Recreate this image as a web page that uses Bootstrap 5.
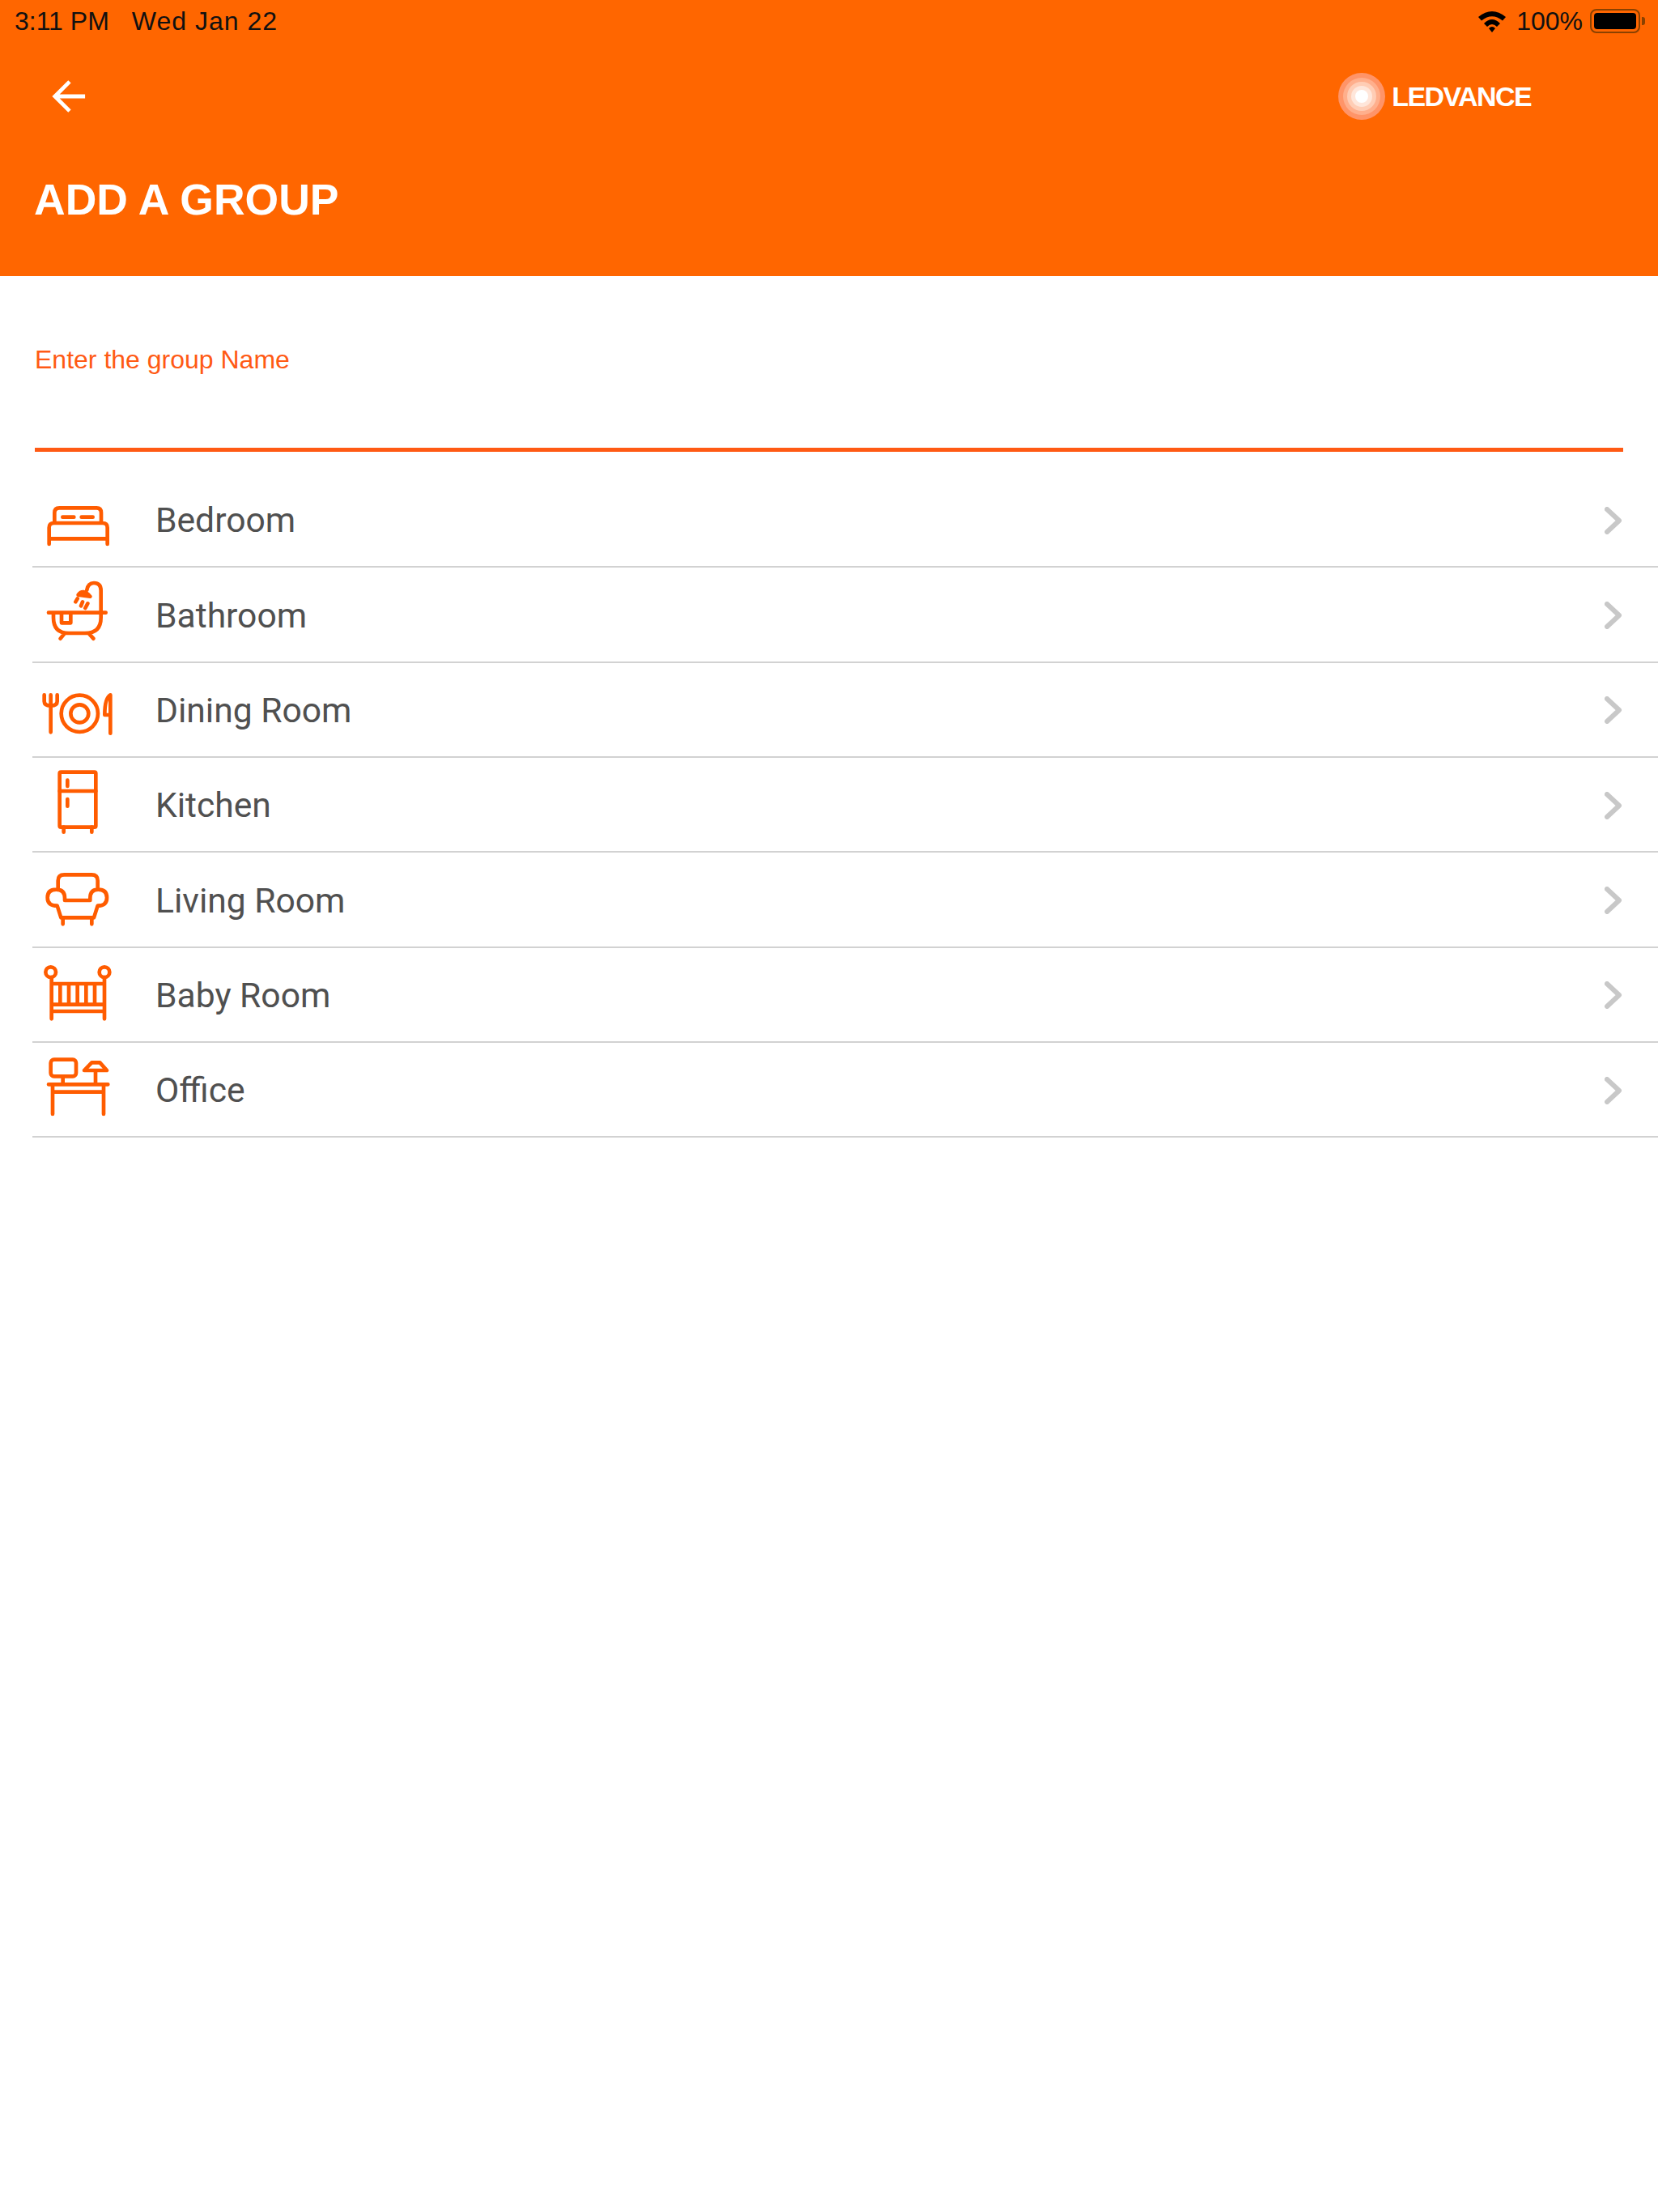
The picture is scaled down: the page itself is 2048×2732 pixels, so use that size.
<!DOCTYPE html>
<html lang="en">
<head>
<meta charset="UTF-8">
<meta name="viewport" content="width=device-width, initial-scale=1.0">
<title>Add a group</title>
<link rel="stylesheet" href="https://cdn.jsdelivr.net/npm/bootstrap@5.3.0/dist/css/bootstrap.min.css">
<style>
    body { background: #fff; font-family: "Liberation Sans", Arial, sans-serif; }
    .app-header { background: #ff6600; height: 341px; }
    .status-row { height: 52px; padding: 0 16px 0 18px; font-size: 32px; color: #111; line-height: 52px; }
    .status-time { margin-right: 28px; }
    .status-date { letter-spacing: 1px; }
    .wifi-icon { margin-right: 12px; }
    .battery-box { width: 62px; height: 30px; border: 2px solid #8a4100; border-radius: 8px; padding: 3px; margin-left: 9px; }
    .battery-fill { background: #000; height: 100%; border-radius: 4px; }
    .battery-tip { width: 4px; height: 10px; background: #8a4100; margin-left: 2px; border-radius: 0 3px 3px 0; }
    .tool-row { height: 64px; margin-top: 35px; padding: 0 157px 0 63px; color: #fff; }
    .logo-word { font-size: 34px; font-weight: 700; letter-spacing: -1.6px; margin-left: 8px; line-height: 1; }
    .page-title { font-size: 53.5px; font-weight: 700; color: #fff; margin: 0; padding: 65px 0 0 42px; line-height: 62px; }
    .group-form { padding: 84px 43px 0 43px; height: 243px; }
    .group-label { color: #ff5a14; font-size: 32px; line-height: 38px; margin: 0; display: block; }
    .group-input { display: block; width: 100%; height: 95px; border: 0; border-bottom: 5px solid #ff5a14; outline: 0; background: transparent; font-size: 32px; }
    .room-list { margin-left: 40px; }
    .room-row { height: 117.33px; padding: 0 44px 0 5px; border: 0; border-bottom: 2px solid #d2d2d2 !important; border-radius: 0; color: #505050; font-family: Roboto, "Liberation Sans", sans-serif; font-size: 42.6px; }
    .room-name { padding-top: 3px; }
    .room-icon { width: 100px; height: 100px; flex: none; margin-right: 47px; fill: none; stroke: #ff5c00; stroke-width: 14; stroke-linecap: round; stroke-linejoin: round; }
    .room-chevron { width: 22px; height: 34px; flex: none; margin-top: 2px; fill: none; stroke: #c8c8c8; stroke-width: 6; stroke-linecap: round; stroke-linejoin: round; }
</style>
</head>
<body>

<header class="app-header">
    <div class="status-row d-flex justify-content-between">
        <div><span class="status-time">3:11 PM</span><span class="status-date">Wed Jan 22</span></div>
        <div class="d-flex align-items-center">
            <svg class="wifi-icon" width="36" height="28" viewBox="0 0 36 28"><path d="M1 9 Q18 -5 35 9 L31 13.5 Q18 3 5 13.5Z M8 17 Q18 7 28 17 L24 21 Q18 15 12 21Z M14 23 Q18 19 22 23 L18 28Z" fill="#000"/></svg>
            <span>100%</span>
            <div class="battery-box"><div class="battery-fill"></div></div>
            <div class="battery-tip"></div>
        </div>
    </div>
    <div class="tool-row d-flex justify-content-between align-items-center">
        <!-- back arrow -->
        <svg width="44" height="44" viewBox="0 0 46 44" fill="none" stroke="#fff" stroke-width="5"><path d="M44 22 H5 M24 3 L5 22 L24 41"/></svg>
        <div class="d-flex align-items-center">
            <svg width="58" height="58" viewBox="0 0 58 58">
                <circle cx="29" cy="29" r="29" fill="#ff9468"/>
                <circle cx="29" cy="29" r="23" fill="#ffaf8c"/>
                <circle cx="29" cy="29" r="18" fill="#ffcdb5"/>
                <circle cx="29" cy="29" r="13" fill="#ffe6da"/>
                <circle cx="29" cy="29" r="8" fill="#fff"/>
            </svg>
            <span class="logo-word">LEDVANCE</span>
        </div>
    </div>
    <h1 class="page-title">ADD A GROUP</h1>
</header>

<form class="group-form">
    <label class="group-label" for="groupName">Enter the group Name</label>
    <input class="group-input" id="groupName" type="text">
</form>

<div class="list-group list-group-flush room-list">
    <div class="list-group-item room-row d-flex align-items-center">
        <svg class="room-icon" viewBox="45 -24 300 300"><path d="M112 132V100Q112 82 130 82H268Q285 82 285 100V132M92 216V155Q92 138 110 138H290Q308 138 308 155V216M92 196H308M142 116H184M212 116H254"/></svg>
        <span class="room-name flex-grow-1">Bedroom</span>
        <svg class="room-chevron" viewBox="0 0 22 34"><path d="M3 3L18 17L3 31"/></svg>
    </div>
    <div class="list-group-item room-row d-flex align-items-center">
        <svg class="room-icon" viewBox="45 329 300 300"><path d="M90 472H302M108 472V490Q108 548 165 548H225Q284 548 284 490V472M150 548L134 568M238 548L256 568M138 472V510H172V472M284 472V390Q284 362 258 362Q236 362 232 388M200 406Q218 382 244 412ZM190 432L197 420M210 447L216 432M226 455L235 438"/></svg>
        <span class="room-name flex-grow-1">Bathroom</span>
        <svg class="room-chevron" viewBox="0 0 22 34"><path d="M3 3L18 17L3 31"/></svg>
    </div>
    <div class="list-group-item room-row d-flex align-items-center">
        <svg class="room-icon" viewBox="45 -9 300 300"><path d="M98 226V88M74 88V112Q74 128 98 128Q122 128 122 112V88M319 230V88Q298 100 298 162H319"/><circle cx="205" cy="157" r="68"/><circle cx="205" cy="157" r="33"/></svg>
        <span class="room-name flex-grow-1">Dining Room</span>
        <svg class="room-chevron" viewBox="0 0 22 34"><path d="M3 3L18 17L3 31"/></svg>
    </div>
    <div class="list-group-item room-row d-flex align-items-center">
        <svg class="room-icon" viewBox="45 343 300 300"><rect x="131" y="372" width="134" height="204" rx="5"/><path d="M131 442H265M160 402V424M160 472V498M146 576V594M250 576V594"/></svg>
        <span class="room-name flex-grow-1">Kitchen</span>
        <svg class="room-chevron" viewBox="0 0 22 34"><path d="M3 3L18 17L3 31"/></svg>
    </div>
    <div class="list-group-item room-row d-flex align-items-center">
        <svg class="room-icon" viewBox="45 5 300 300"><path d="M125 118V85Q125 63 148 63H250Q272 63 272 85V118M150 158V150Q150 118 118 118Q86 118 86 148Q86 178 122 178L136 222H258L272 178Q306 178 306 148Q306 118 274 118Q244 118 244 150V158ZM143 222V246M250 222V246"/></svg>
        <span class="room-name flex-grow-1">Living Room</span>
        <svg class="room-chevron" viewBox="0 0 22 34"><path d="M3 3L18 17L3 31"/></svg>
    </div>
    <div class="list-group-item room-row d-flex align-items-center">
        <svg class="room-icon" viewBox="45 -33 300 300"><circle cx="98" cy="35" r="19"/><circle cx="297" cy="35" r="19"/><path d="M101 54V208M297 54V208M101 78H297M101 155H297M101 180H297M133 78V155M165 78V155M197 78V155M229 78V155M261 78V155"/></svg>
        <span class="room-name flex-grow-1">Baby Room</span>
        <svg class="room-chevron" viewBox="0 0 22 34"><path d="M3 3L18 17L3 31"/></svg>
    </div>
    <div class="list-group-item room-row d-flex align-items-center">
        <svg class="room-icon" viewBox="45 320 300 300"><rect x="98" y="358" width="94" height="62" rx="12"/><path d="M143 420V450M222 398L250 369H280L306 398ZM264 398V450M90 450H310M105 450V560M294 450V560M105 478H294"/></svg>
        <span class="room-name flex-grow-1">Office</span>
        <svg class="room-chevron" viewBox="0 0 22 34"><path d="M3 3L18 17L3 31"/></svg>
    </div>
</div>

<script src="https://cdn.jsdelivr.net/npm/bootstrap@5.3.0/dist/js/bootstrap.bundle.min.js"></script>
</body>
</html>
